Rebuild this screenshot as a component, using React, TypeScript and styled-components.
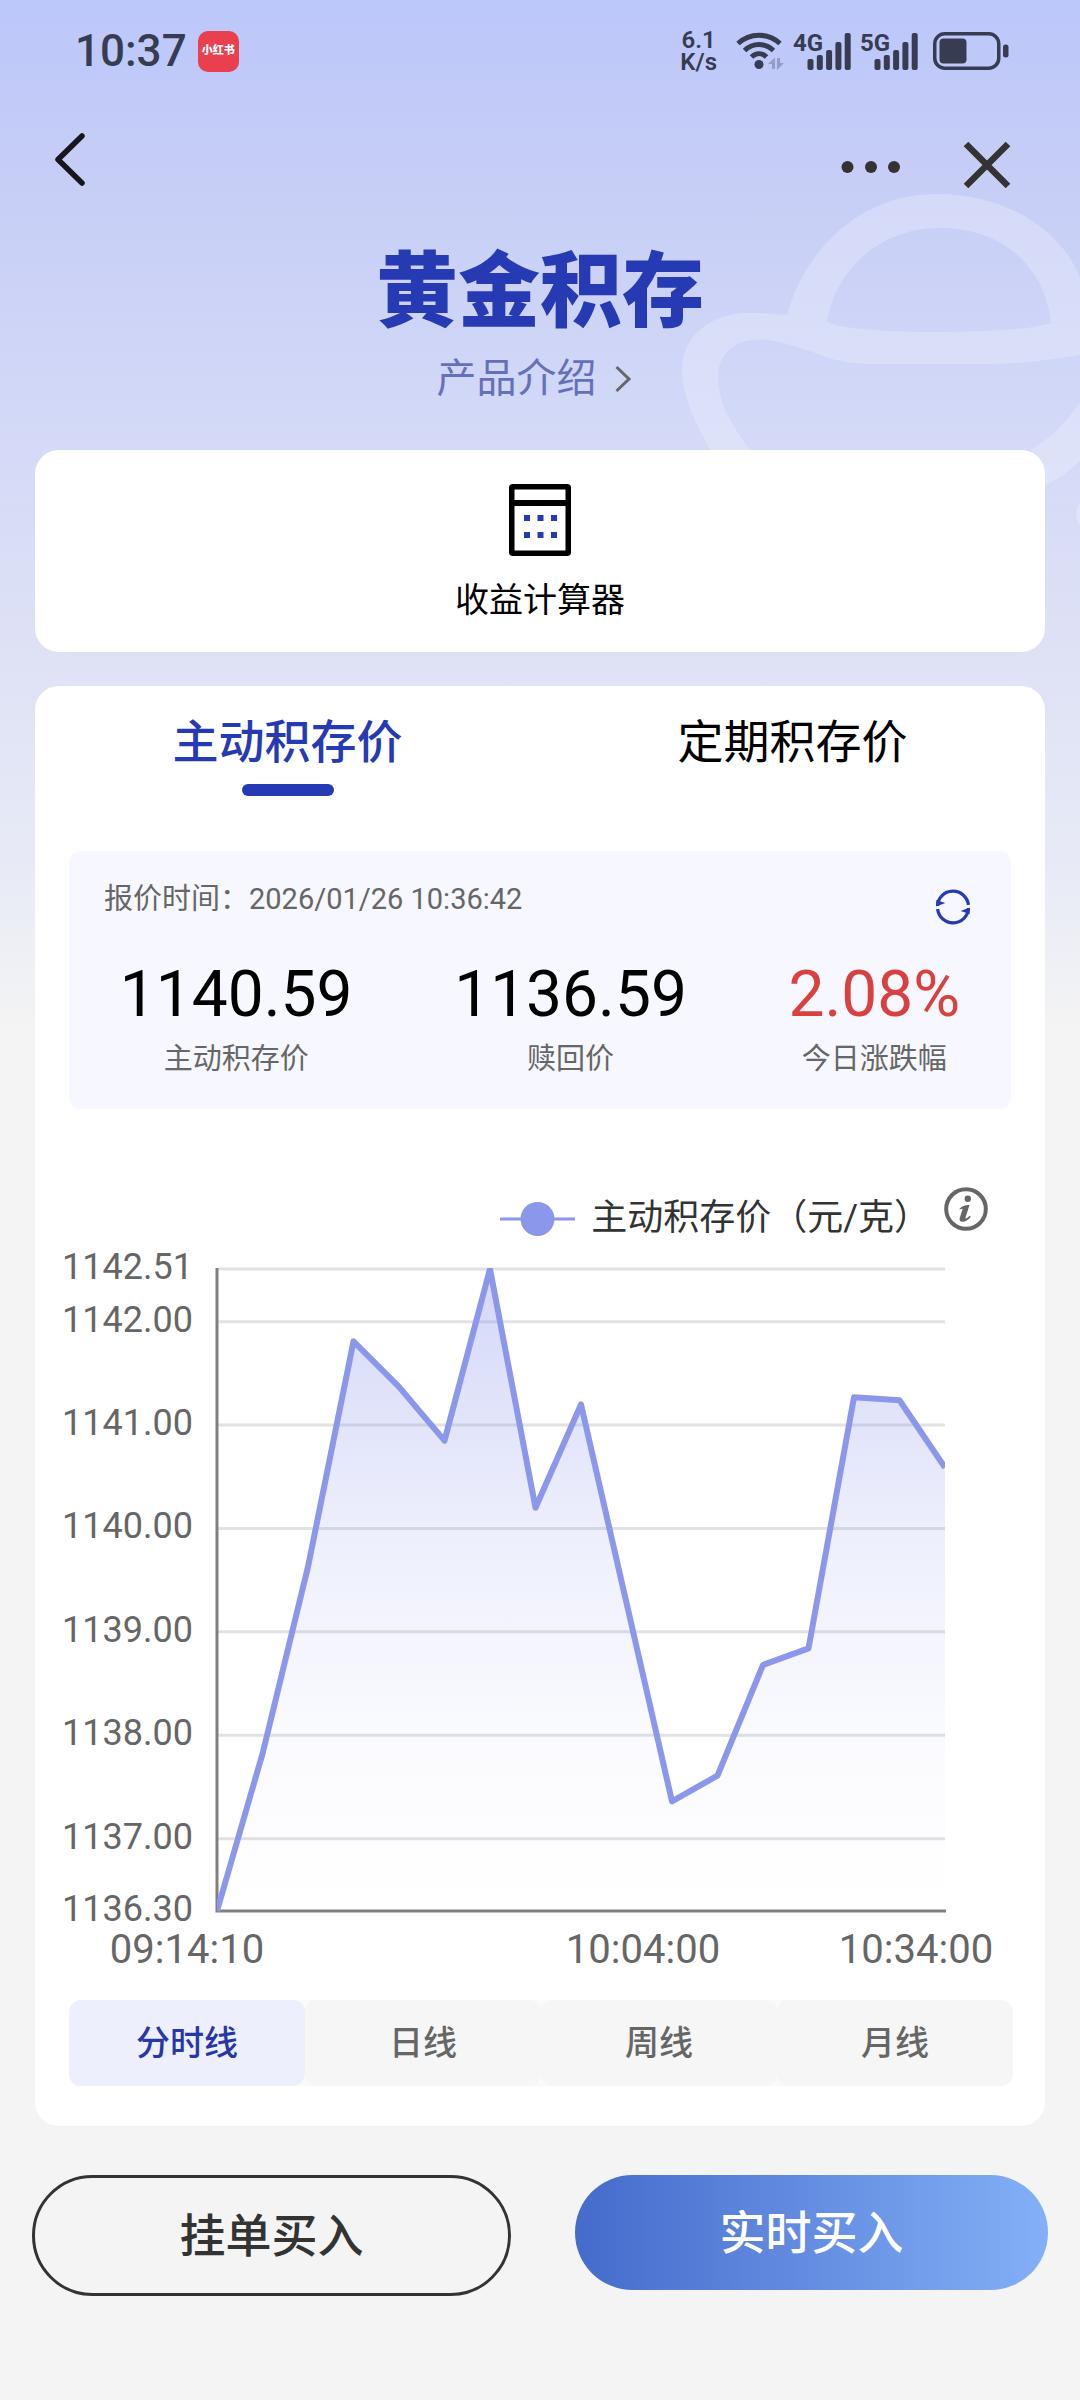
import React, { useState } from "react";
import styled, { createGlobalStyle } from "styled-components";

const ink = "#373c52";
const brand = "#263ab3";
const grey = "#666666";
const lineBlue = "#8a97eb";
const sans = `Roboto, "Noto Sans CJK SC", sans-serif`;

const GlobalStyle = createGlobalStyle`
  *, *::before, *::after { box-sizing: border-box; }
  body { margin: 0; background: #f4f4f4; }
  button { margin: 0; padding: 0; border: 0; background: none; font: inherit; color: inherit; cursor: pointer; }
  svg { display: block; flex: none; }
`;

const Page = styled.div`
  position: relative;
  min-height: 100vh;
  padding-bottom: 103px;
  overflow: hidden;
  font-family: ${sans};
  color: #000;
  background: linear-gradient(
      180deg,
      #bcc7fa 0,
      #c8cff6 210px,
      #d4daf7 450px,
      #dfe2f5 660px,
      #e7eaf6 860px,
      #f4f4f4 1030px
    )
    no-repeat #f4f4f4;
`;

const Backdrop = styled.svg`
  position: absolute;
  top: 190px;
  right: 0;
`;

const Content = styled.div`
  position: relative;
`;

const StatusBar = styled.div`
  display: flex;
  align-items: center;
  justify-content: space-between;
  height: 102px;
  padding: 0 71px 0 75px;
  color: ${ink};
`;

const StatusGroup = styled.div<{ $gap: number }>`
  display: flex;
  align-items: center;
  gap: ${(p) => p.$gap}px;
`;

const Clock = styled.time`
  font-size: 44px;
  line-height: 52px;
  font-weight: 500;
`;

const AppBadge = styled.span`
  display: flex;
  align-items: center;
  justify-content: center;
  width: 41px;
  height: 41px;
  border-radius: 10px;
  background: #ea3f4e;
  color: #fff;
  font-size: 11px;
  line-height: 12px;
  font-weight: 900;
`;

const NetSpeed = styled.div`
  display: flex;
  flex-direction: column;
  align-items: center;
  padding-right: 4px;
  font-size: 24px;
  line-height: 22px;
  font-weight: 600;
`;

const SignalSvg = styled.svg`
  overflow: visible;
  font-family: ${sans};
  font-size: 24px;
  font-weight: 700;
`;

const NavBar = styled.nav`
  display: flex;
  align-items: center;
  justify-content: space-between;
  height: 126px;
  padding: 0 63px 0 48px;
`;

const NavActions = styled.div`
  display: flex;
  align-items: center;
  gap: 56px;
`;

const Hero = styled.header`
  display: flex;
  flex-direction: column;
  align-items: center;
  gap: 14px;
  padding: 19px 0 43px;
`;

const Title = styled.h1`
  margin: 0;
  color: ${brand};
  font-size: 82px;
  line-height: 90px;
  font-weight: 900;
`;

const IntroLink = styled.a`
  display: flex;
  align-items: center;
  gap: 17px;
  padding-right: 12px;
  color: #6570b9;
  font-size: 40px;
  line-height: 56px;
  text-decoration: none;
`;

const Main = styled.main`
  display: flex;
  flex-direction: column;
  gap: 34px;
  padding: 0 35px;
`;

const ToolCard = styled.button`
  display: flex;
  flex-direction: column;
  align-items: center;
  gap: 20px;
  padding: 34px 0 28px;
  border-radius: 24px;
  background: #fff;
  font-size: 34px;
  line-height: 48px;
`;

const PriceCard = styled.section`
  padding: 28px 0 40px;
  border-radius: 24px;
  background: #fff;
`;

const Tabs = styled.div`
  display: grid;
  grid-template-columns: 1fr 1fr;
`;

const Tab = styled.button<{ $active: boolean }>`
  display: flex;
  flex-direction: column;
  align-items: center;
  gap: 14px;
  color: ${(p) => (p.$active ? brand : "#000")};
  font-size: 46px;
  line-height: 56px;
  font-weight: ${(p) => (p.$active ? 500 : 400)};

  &::after {
    content: "";
    width: 92px;
    height: 12px;
    border-radius: 6px;
    background: ${(p) => (p.$active ? brand : "transparent")};
  }
`;

const Quote = styled.section`
  margin: 55px 34px 0;
  padding: 28px 0 30px;
  border-radius: 12px;
  background: #f6f7ff;
`;

const QuoteHead = styled.div`
  display: flex;
  align-items: flex-start;
  justify-content: space-between;
  padding: 0 30px 0 35px;
  color: ${grey};
  font-size: 29px;
  line-height: 40px;
`;

const RefreshButton = styled.button`
  display: flex;
  align-items: center;
  justify-content: center;
  width: 56px;
  height: 56px;
`;

const Figures = styled.dl`
  display: flex;
  justify-content: space-around;
  margin: 22px 0 0;
`;

const Figure = styled.div`
  display: flex;
  flex-direction: column-reverse;
  align-items: center;
  gap: 6px;
`;

const FigureLabel = styled.dt`
  color: ${grey};
  font-size: 29px;
  line-height: 40px;
`;

const FigureValue = styled.dd<{ $rise?: boolean }>`
  margin: 0;
  color: ${(p) => (p.$rise ? "#d8413f" : "#000")};
  font-size: 64px;
  line-height: 76px;
`;

const Legend = styled.div`
  display: flex;
  align-items: flex-start;
  justify-content: flex-end;
  gap: 14px;
  margin-top: 78px;
  padding-right: 57px;
`;

const LegendItem = styled.div`
  display: flex;
  align-items: center;
  gap: 16px;
  color: #333;
  font-size: 36px;
  line-height: 62px;
`;

const Chart = styled.svg`
  width: 100%;
  height: auto;
  overflow: visible;
  font-family: ${sans};
  fill: ${grey};
`;

const PriceTick = styled.text`
  font-size: 36px;
  text-anchor: end;
`;

const TimeTick = styled.text`
  font-size: 40px;
  text-anchor: middle;
`;

const Segments = styled.div`
  display: grid;
  grid-template-columns: repeat(4, 1fr);
  margin: 20px 32px 0 34px;
  border-radius: 12px;
  background: #fafafa;
`;

const Segment = styled.button<{ $active: boolean }>`
  height: 86px;
  border-radius: 12px;
  background: ${(p) => (p.$active ? "#eeeffd" : "#f6f6f6")};
  color: ${(p) => (p.$active ? "#2737a8" : grey)};
  font-size: 34px;
  line-height: 48px;
  font-weight: 500;
`;

const BuyBar = styled.footer`
  display: flex;
  align-items: flex-start;
  gap: 64px;
  padding: 49px 32px 0;
`;

const BuyButton = styled.button<{ $primary?: boolean }>`
  box-sizing: content-box;
  flex: 1 1 0;
  height: 115px;
  border: ${(p) => (p.$primary ? "0" : "3px solid #333")};
  border-radius: 61px;
  background: ${(p) =>
    p.$primary ? "linear-gradient(90deg, #456bcb, #83b0f7)" : "transparent"};
  color: ${(p) => (p.$primary ? "#fff" : "#333")};
  font-size: 46px;
  line-height: 56px;
  font-weight: 500;
`;

function WifiIcon() {
  return (
    <svg width="48" height="38" viewBox="0 0 48 38" fill="none" aria-hidden="true">
      <g stroke={ink} strokeWidth="5">
        <path d="M2 11.500C14 .5 32 .5 44 11.500" />
        <path d="M8.500 18.500C17 10.500 29 10.500 37.500 18.500" />
        <path d="M15.500 25C20 20.500 26 20.500 30.500 25" />
      </g>
      <circle cx="23" cy="32.500" r="4.500" fill={ink} />
      <path d="M39 25.500v11.500h-3v-5h-4zM41 26h3v5h4l-7 7z" fill="#959cc9" />
    </svg>
  );
}

function SignalIcon({ label }: { label: string }) {
  const tops = [26, 22, 17, 9, 0];
  return (
    <SignalSvg width="57" height="37" viewBox="0 0 57 37" fill={ink} role="img" aria-label={label}>
      <text x="-1" y="18">
        {label}
      </text>
      {tops.map((top, i) => (
        <rect key={top} x={13.5 + i * 9.3} y={top} width="6" height={37 - top} rx="2" />
      ))}
    </SignalSvg>
  );
}

function BatteryIcon() {
  return (
    <svg width="76" height="38" viewBox="0 0 76 38" fill="none" aria-hidden="true">
      <rect x="1.750" y="1.750" width="64" height="34.500" rx="10" stroke={ink} strokeWidth="3.500" />
      <rect x="6.500" y="6.500" width="27" height="25" rx="4" fill={ink} />
      <rect x="70" y="12.500" width="5.500" height="13" rx="2.500" fill={ink} />
    </svg>
  );
}

function CalculatorIcon() {
  return (
    <svg width="62" height="72" viewBox="0 0 62 72" fill="none" aria-hidden="true">
      <rect x="2.750" y="2.750" width="56.500" height="66.500" rx="1" stroke="#000" strokeWidth="5.500" />
      <path d="M3 19h56" stroke="#000" strokeWidth="6" />
      {[15, 28.500, 42].map((x) =>
        [31, 48].map((y) => <rect key={`${x}-${y}`} x={x} y={y} width="6" height="6" fill={brand} />)
      )}
    </svg>
  );
}

function RefreshIcon() {
  return (
    <svg width="36" height="36" viewBox="0 0 36 36" fill="none" aria-hidden="true">
      <g stroke={brand} strokeWidth="3.200">
        <path d="M2.500 17A15.500 15.500 0 0 1 33.400 16" />
        <path d="M33.500 19A15.500 15.500 0 0 1 2.600 20" />
      </g>
      <path d="M1.300 17.500V11l9 3zM34.700 18.500V25l-9-3z" fill={brand} />
    </svg>
  );
}

function InfoIcon() {
  return (
    <svg width="44" height="44" viewBox="0 0 44 44" fill="none" aria-hidden="true">
      <circle cx="22" cy="22" r="19.800" stroke={grey} strokeWidth="4" />
      <circle cx="23.800" cy="11.800" r="3.200" fill={grey} />
      <path
        d="M15 22.500c3-3.500 6-4.500 10.500-4.500l-4 12.500c-.3 1.200.6 1.200 1.400.6l3-2.300.8 1.200c-2.600 3-5.400 4.700-8 4.700-2.800 0-3.600-1.600-3-3.700l2.800-8.500c.2-1-.6-1-1.200-.6z"
        fill={grey}
      />
    </svg>
  );
}

const prices = [
  1136.3, 1137.82, 1139.63, 1141.81, 1141.37, 1140.85, 1142.51, 1140.2, 1141.2,
  1139.28, 1137.36, 1137.61, 1138.68, 1138.84, 1141.27, 1141.24, 1140.59,
];
const ticks = [1142.51, 1142, 1141, 1140, 1139, 1138, 1137, 1136.3];
const times = [
  { x: 152, label: "09:14:10" },
  { x: 608, label: "10:04:00" },
  { x: 881, label: "10:34:00" },
];
const plot = { left: 182, right: 910, top: 20, bottom: 662, max: 1142.51, min: 1136.3 };

const yOf = (value: number) =>
  plot.top + ((plot.max - value) / (plot.max - plot.min)) * (plot.bottom - plot.top);
const xOf = (index: number) =>
  plot.left + (index / (prices.length - 1)) * (plot.right - plot.left);

function PriceChart() {
  const points = prices.map((price, i) => `${xOf(i)},${yOf(price)}`).join(" ");
  return (
    <Chart viewBox="0 0 1010 731" role="img" aria-label="主动积存价（元/克）">
      <defs>
        <linearGradient id="area" x1="0" y1="0" x2="0" y2="1">
          <stop offset="0" stopColor={lineBlue} stopOpacity="0.380" />
          <stop offset="0.400" stopColor={lineBlue} stopOpacity="0.160" />
          <stop offset="0.720" stopColor={lineBlue} stopOpacity="0.045" />
          <stop offset="1" stopColor={lineBlue} stopOpacity="0" />
        </linearGradient>
        <clipPath id="plot">
          <rect x={plot.left} y={plot.top - 1} width={plot.right - plot.left} height={plot.bottom - plot.top + 2} />
        </clipPath>
      </defs>
      {ticks.map((tick) => (
        <g key={tick}>
          {tick !== plot.min && (
            <path d={`M${plot.left} ${yOf(tick)}H${plot.right}`} stroke="#e2e2e2" strokeWidth="3" />
          )}
          <PriceTick x="158" y={yOf(tick) + 10}>
            {tick.toFixed(2)}
          </PriceTick>
        </g>
      ))}
      <path
        d={`M${plot.left} ${plot.top - 1}V${plot.bottom}H${plot.right + 1}`}
        fill="none"
        stroke="#808080"
        strokeWidth="3"
      />
      <g clipPath="url(#plot)">
        <polygon
          points={`${plot.left},${plot.bottom} ${points} ${plot.right},${plot.bottom}`}
          fill="url(#area)"
        />
        <polyline points={points} fill="none" stroke={lineBlue} strokeWidth="6" strokeLinejoin="round" />
      </g>
      {times.map((time) => (
        <TimeTick key={time.label} x={time.x} y="714">
          {time.label}
        </TimeTick>
      ))}
    </Chart>
  );
}

const tabNames = ["主动积存价", "定期积存价"];
const periods = ["分时线", "日线", "周线", "月线"];

export default function App() {
  const [tab, setTab] = useState(0);
  const [period, setPeriod] = useState(0);

  return (
    <Page>
      <GlobalStyle />
      <Backdrop width="400" height="345" viewBox="680 190 400 345" aria-hidden="true">
        <g fill="#fff" fillOpacity="0.230">
          <path
            fillRule="evenodd"
            d="M710 450C694 420 682 395 682 370C682 335 712 313 748 313C764 313 776 314 787 315C805 250 860 194 936 194C1008 194 1060 230 1080 277V355C1045 361 1015 364 986 364H872C830 363 830 356 790 345C745 330 718 347 718 378C718 402 732 426 750 450ZM827 322C834 275 876 228 939 228C1008 228 1046 272 1051 323C1030 330 980 332 942 332C890 332 845 330 827 322Z"
          />
          <path d="M1080 402C1068 421 1051 438 1031 450L1046 485C1060 478 1071 470 1080 460Z" />
          <ellipse cx="1086" cy="515" rx="10" ry="14" />
        </g>
      </Backdrop>
      <Content>
        <StatusBar>
          <StatusGroup $gap={11}>
            <Clock>10:37</Clock>
            <AppBadge>小红书</AppBadge>
          </StatusGroup>
          <StatusGroup $gap={15}>
            <NetSpeed>
              <span>6.1</span>
              <span>K/s</span>
            </NetSpeed>
            <StatusGroup $gap={10}>
              <WifiIcon />
              <SignalIcon label="4G" />
              <SignalIcon label="5G" />
            </StatusGroup>
            <BatteryIcon />
          </StatusGroup>
        </StatusBar>

        <NavBar>
          <button aria-label="返回">
            <svg width="44" height="64" viewBox="0 0 44 64" fill="none">
              <path d="M34 3L10 26.500L34 50" stroke="#15171c" strokeWidth="5.500" strokeLinecap="round" strokeLinejoin="round" />
            </svg>
          </button>
          <NavActions>
            <button aria-label="更多">
              <svg width="60" height="60" viewBox="0 0 60 60" fill="#333">
                <circle cx="6.500" cy="32" r="6" />
                <circle cx="30" cy="32" r="6" />
                <circle cx="53" cy="32" r="6" />
              </svg>
            </button>
            <button aria-label="关闭">
              <svg width="60" height="60" viewBox="0 0 60 60" fill="none">
                <path d="M9 9L51 51M51 9L9 51" stroke="#333" strokeWidth="6.500" />
              </svg>
            </button>
          </NavActions>
        </NavBar>

        <Hero>
          <Title>黄金积存</Title>
          <IntroLink href="#intro">
            产品介绍
            <svg width="18" height="28" viewBox="0 0 18 28" fill="none" aria-hidden="true">
              <path d="M2.500 2L15 14L2.500 26" stroke={grey} strokeWidth="3" />
            </svg>
          </IntroLink>
        </Hero>

        <Main>
          <ToolCard>
            <CalculatorIcon />
            收益计算器
          </ToolCard>

          <PriceCard>
            <Tabs role="tablist">
              {tabNames.map((name, i) => (
                <Tab key={name} role="tab" aria-selected={tab === i} $active={tab === i} onClick={() => setTab(i)}>
                  {name}
                </Tab>
              ))}
            </Tabs>

            <Quote>
              <QuoteHead>
                <span>
                  报价时间：<time>2026/01/26 10:36:42</time>
                </span>
                <RefreshButton aria-label="刷新">
                  <RefreshIcon />
                </RefreshButton>
              </QuoteHead>
              <Figures>
                <Figure>
                  <FigureLabel>主动积存价</FigureLabel>
                  <FigureValue>1140.59</FigureValue>
                </Figure>
                <Figure>
                  <FigureLabel>赎回价</FigureLabel>
                  <FigureValue>1136.59</FigureValue>
                </Figure>
                <Figure>
                  <FigureLabel>今日涨跌幅</FigureLabel>
                  <FigureValue $rise>2.08%</FigureValue>
                </Figure>
              </Figures>
            </Quote>

            <Legend>
              <LegendItem>
                <svg width="75" height="36" viewBox="0 0 75 36" aria-hidden="true">
                  <path d="M0 19H75" stroke={lineBlue} strokeWidth="3" />
                  <circle cx="37.500" cy="19" r="17" fill={lineBlue} />
                </svg>
                主动积存价（元/克）
              </LegendItem>
              <button aria-label="说明">
                <InfoIcon />
              </button>
            </Legend>
            <PriceChart />

            <Segments>
              {periods.map((name, i) => (
                <Segment key={name} aria-pressed={period === i} $active={period === i} onClick={() => setPeriod(i)}>
                  {name}
                </Segment>
              ))}
            </Segments>
          </PriceCard>
        </Main>

        <BuyBar>
          <BuyButton>挂单买入</BuyButton>
          <BuyButton $primary>实时买入</BuyButton>
        </BuyBar>
      </Content>
    </Page>
  );
}
